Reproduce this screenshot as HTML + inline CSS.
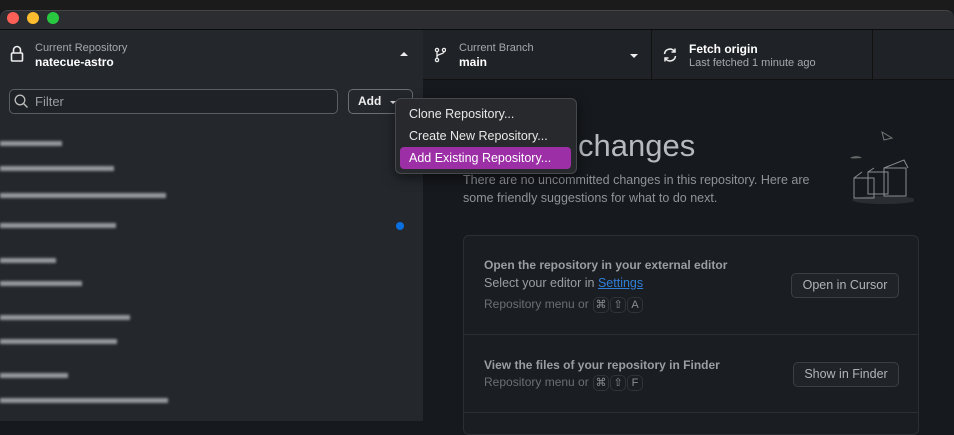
<!DOCTYPE html><html><head><style>
*{box-sizing:border-box;margin:0;padding:0}
body{width:954px;height:421px;overflow:hidden;background:#16191d;font-family:"Liberation Sans",sans-serif;position:relative}
.a{position:absolute}
.bar{position:absolute;height:5px;background:#c4c8cc;filter:blur(1.3px);opacity:.7;left:0}
.k{display:inline-block;border:1px solid #2f343a;border-radius:5px;width:16px;height:16px;text-align:center;font-size:11px;line-height:14px;color:#8b8f94;margin-left:1px;vertical-align:middle}
</style></head><body>
<div class="a" style="left:0;top:0;width:954px;height:10px;background:#1b1b1b"></div>
<div class="a" style="left:0;top:10px;width:954px;height:20px;background:#2b2d31;border-top:1px solid #444;border-radius:8px 8px 0 0"></div>
<div class="a" style="left:7px;top:12px;width:12px;height:12px;border-radius:50%;background:#fe5f57"></div>
<div class="a" style="left:27px;top:12px;width:12px;height:12px;border-radius:50%;background:#febc2e"></div>
<div class="a" style="left:47px;top:12px;width:12px;height:12px;border-radius:50%;background:#28c840"></div>
<div class="a" style="left:0;top:29px;width:954px;height:1px;background:#0b0c0e"></div>
<div class="a" style="left:0;top:30px;width:423px;height:391px;background:#24282d"></div>
<div class="a" style="left:423px;top:30px;width:531px;height:50px;background:#1f2327;border-bottom:1px solid #111"></div>
<div class="a" style="left:651px;top:30px;width:1px;height:50px;background:#111"></div>
<div class="a" style="left:872px;top:30px;width:1px;height:50px;background:#111"></div>
<svg class="a" style="left:10px;top:45px" width="14" height="18" viewBox="0 0 14 18"><rect x="1.5" y="8" width="11" height="8" rx="1" fill="none" stroke="#eee" stroke-width="1.6"/><path d="M3.5 8V5a3.5 3.5 0 0 1 7 0v3" fill="none" stroke="#eee" stroke-width="1.6"/></svg>
<div class="a" style="left:35px;top:42px;font-size:11px;color:#a5a9ad">Current Repository</div>
<div class="a" style="left:35px;top:55px;font-size:12px;font-weight:bold;color:#fff">natecue-astro</div>
<div class="a" style="left:400px;top:52px;border:4px solid transparent;border-bottom:4px solid #eee;border-top:0"></div>
<svg class="a" style="left:434px;top:47px" width="12" height="16" viewBox="0 0 12 16"><circle cx="3" cy="3" r="1.6" fill="none" stroke="#eee" stroke-width="1.3"/><circle cx="3" cy="13" r="1.6" fill="none" stroke="#eee" stroke-width="1.3"/><circle cx="10" cy="3" r="1.6" fill="none" stroke="#eee" stroke-width="1.3"/><path d="M3 4.6v6.8M10 4.6c0 3-7 2-7 5" fill="none" stroke="#eee" stroke-width="1.3"/></svg>
<div class="a" style="left:459px;top:42px;font-size:11px;color:#a5a9ad">Current Branch</div>
<div class="a" style="left:459px;top:55px;font-size:12px;font-weight:bold;color:#fff">main</div>
<div class="a" style="left:630px;top:54px;border:4px solid transparent;border-top:4px solid #eee;border-bottom:0"></div>
<svg class="a" style="left:662px;top:47px" width="16" height="16" viewBox="0 0 16 16"><path d="M2.5 7a5.5 5.5 0 0 1 10-2.5M13.5 9a5.5 5.5 0 0 1-10 2.5" fill="none" stroke="#eee" stroke-width="1.5"/><path d="M13 1.5v3.5h-3.5M3 14.5V11h3.5" fill="none" stroke="#eee" stroke-width="1.5"/></svg>
<div class="a" style="left:689px;top:42px;font-size:12px;font-weight:bold;color:#fff">Fetch origin</div>
<div class="a" style="left:689px;top:57px;font-size:11px;color:#a5a9ad">Last fetched 1 minute ago</div>
<div class="a" style="left:9px;top:89px;width:329px;height:25px;border:1px solid #5a5f65;border-radius:5px;background:#1f2226"></div>
<svg class="a" style="left:14px;top:94px" width="15" height="15" viewBox="0 0 15 15"><circle cx="6" cy="6" r="4.8" fill="none" stroke="#bbb" stroke-width="1.3"/><path d="M9.5 9.5l4 4" stroke="#bbb" stroke-width="1.4"/></svg>
<div class="a" style="left:35px;top:94px;font-size:13px;color:#9a9ea3">Filter</div>
<div class="a" style="left:348px;top:89px;width:65px;height:25px;border:1px solid #6a6f75;border-radius:5px;background:#24282d"></div>
<div class="a" style="left:358px;top:94px;font-size:12px;color:#eee;font-weight:bold">Add</div>
<div class="a" style="left:390px;top:101px;border:3px solid transparent;border-top:3px solid #ddd;border-bottom:0"></div>
<div class="bar" style="top:141px;width:62px"></div>
<div class="bar" style="top:166px;width:114px"></div>
<div class="bar" style="top:193px;width:166px"></div>
<div class="bar" style="top:223px;width:116px"></div>
<div class="bar" style="top:258px;width:56px"></div>
<div class="bar" style="top:281px;width:82px"></div>
<div class="bar" style="top:315px;width:130px"></div>
<div class="bar" style="top:339px;width:117px"></div>
<div class="bar" style="top:373px;width:68px"></div>
<div class="bar" style="top:398px;width:168px"></div>
<div class="a" style="left:396px;top:222px;width:8px;height:8px;border-radius:50%;background:#0a6fe0"></div>
<div class="a" style="left:578px;top:128px;font-size:31px;color:#b6babe">changes</div>
<div class="a" style="left:463px;top:171px;width:380px;font-size:12.5px;line-height:18px;color:#8f9398">There are no uncommitted changes in this repository. Here are some friendly suggestions for what to do next.</div>
<svg class="a" style="left:842px;top:128px" width="72" height="76" viewBox="0 0 72 76"><path d="M40 4l10 6-8 2z" fill="none" stroke="#777" stroke-width="1"/><path d="M8 30c4-3 10-2 12 0-4 0-8 1-12 0z" fill="#666"/><ellipse cx="42" cy="72" rx="32" ry="4" fill="#2a2d31"/><g fill="none" stroke="#8a8d91" stroke-width="1"><rect x="12" y="50" width="20" height="20"/><rect x="26" y="44" width="20" height="22"/><rect x="42" y="40" width="22" height="28"/><path d="M42 40l20-8 4 8M12 50l8-6M26 44l6-4"/></g></svg>
<div class="a" style="left:463px;top:235px;width:456px;height:200px;background:#1a1d21;border:1px solid #2b2f34;border-radius:6px"></div>
<div class="a" style="left:464px;top:334px;width:454px;height:1px;background:#2b2f34"></div>
<div class="a" style="left:464px;top:412px;width:454px;height:1px;background:#2b2f34"></div>
<div class="a" style="left:484px;top:258px;font-size:12px;font-weight:bold;color:#9a9ea3">Open the repository in your external editor</div>
<div class="a" style="left:484px;top:276px;font-size:12.5px;color:#9a9ea3">Select your editor in <span style="color:#2f7fd8;text-decoration:underline">Settings</span></div>
<div class="a" style="left:484px;top:297px;font-size:12px;color:#6b6f74">Repository menu or <span class="k">⌘</span><span class="k">⇧</span><span class="k">A</span></div>
<div class="a" style="left:791px;top:273px;width:108px;height:25px;border:1px solid #3a3f45;border-radius:5px;background:#202428;color:#b0b4b8;font-size:12.5px;text-align:center;line-height:23px">Open in Cursor</div>
<div class="a" style="left:484px;top:358px;font-size:12px;font-weight:bold;color:#9a9ea3">View the files of your repository in Finder</div>
<div class="a" style="left:484px;top:375px;font-size:12px;color:#6b6f74">Repository menu or <span class="k">⌘</span><span class="k">⇧</span><span class="k">F</span></div>
<div class="a" style="left:793px;top:362px;width:106px;height:25px;border:1px solid #3a3f45;border-radius:5px;background:#202428;color:#b0b4b8;font-size:12.5px;text-align:center;line-height:23px">Show in Finder</div>
<div class="a" style="left:395px;top:98px;width:182px;height:76px;background:#27292c;border:1px solid #46484c;border-radius:6px;box-shadow:0 4px 12px rgba(0,0,0,.5)"></div>
<div class="a" style="left:400px;top:147px;width:171px;height:22px;background:#9c2ea6;border-radius:4px"></div>
<div class="a" style="left:409px;top:107px;font-size:12.5px;color:#e8e8e8">Clone Repository...</div>
<div class="a" style="left:409px;top:129px;font-size:12.5px;color:#e8e8e8">Create New Repository...</div>
<div class="a" style="left:409px;top:151px;font-size:12.5px;color:#fff">Add Existing Repository...</div>
</body></html>
